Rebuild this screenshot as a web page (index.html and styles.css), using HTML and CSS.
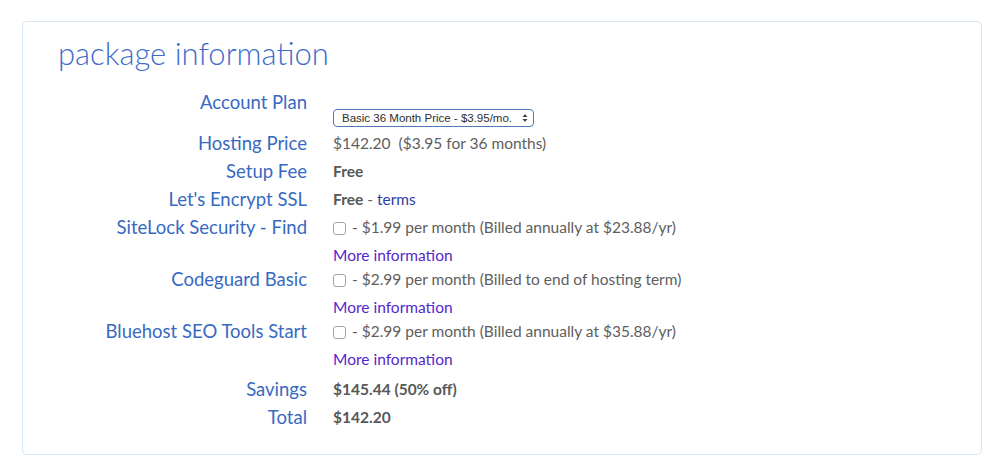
FILE: index.html
```html
<!DOCTYPE html>
<html>
    <head>
        <title>Package information</title>
        <link rel="stylesheet" href="styles.css">
    </head>
    <body>
        <div class="panel">
            <h2 class="panelTitle">package information</h2>
            <div class="info">
                <div class="row plan">
                    <div class="label">Account Plan</div>
                    <div class="value">
                        <span class="selectWrap">
                            <select name="plan" class="planSelect">
                                <option>Basic 36 Month Price - $3.95/mo.</option>
                                <option>Basic 24 Month Price - $4.95/mo.</option>
                                <option>Basic 12 Month Price - $5.95/mo.</option>
                            </select>
                            <svg class="selectArrow" width="6" height="10" viewBox="0 0 6 10">
                                <path d="M0.5 4 L3 1 L5.5 4 Z M0.5 6 L3 9 L5.5 6 Z" fill="#444" />
                            </svg>
                        </span>
                    </div>
                </div>
                <div class="row">
                    <div class="label">Hosting Price</div>
                    <div class="value">$142.20&nbsp; ($3.95 for 36 months)</div>
                </div>
                <div class="row">
                    <div class="label">Setup Fee</div>
                    <div class="value strong">Free</div>
                </div>
                <div class="row">
                    <div class="label">Let's Encrypt SSL</div>
                    <div class="value"><span class="strong">Free</span> - <a href="#" class="terms">terms</a></div>
                </div>
                <div class="row addon">
                    <div class="label">SiteLock Security - Find</div>
                    <div class="value">
                        <label class="check"><input type="checkbox" class="box" /> - $1.99 per month (Billed annually at $23.88/yr)</label>
                        <a href="#" class="more">More information</a>
                    </div>
                </div>
                <div class="row addon">
                    <div class="label">Codeguard Basic</div>
                    <div class="value">
                        <label class="check"><input type="checkbox" class="box" /> - $2.99 per month (Billed to end of hosting term)</label>
                        <a href="#" class="more">More information</a>
                    </div>
                </div>
                <div class="row addon">
                    <div class="label">Bluehost SEO Tools Start</div>
                    <div class="value">
                        <label class="check"><input type="checkbox" class="box" /> - $2.99 per month (Billed annually at $35.88/yr)</label>
                        <a href="#" class="more">More information</a>
                    </div>
                </div>
                <div class="row savings">
                    <div class="label">Savings</div>
                    <div class="value strong">$145.44 (50% off)</div>
                </div>
                <div class="row">
                    <div class="label">Total</div>
                    <div class="value strong">$142.20</div>
                </div>
            </div>
        </div>
    </body>
</html>
```

FILE: styles.css
```css
body{
    margin: 0;
    background-color: #fff;
    font-family: Lato, "Open Sans", sans-serif;
}

.panel{
    width: 958px;
    margin: 21px 0 0 22px;
    padding: 11px 0 23px 0;
    border: 1px solid #d7e5f3;
    border-radius: 5px;
}

.panelTitle{
    margin: 0 0 15px 35px;
    font-size: 31px;
    line-height: 40px;
    font-weight: 300;
    color: #3d6bcc;
}

.row{
    display: grid;
    grid-template-columns: 284px 1fr;
    column-gap: 26px;
    align-items: start;
}

.label{
    text-align: right;
    font-size: 18.5px;
    line-height: 28px;
    font-weight: 400;
    color: #3869c2;
}

.value{
    font-size: 15.5px;
    line-height: 28px;
    color: #5e5e5e;
}

.strong{
    font-weight: 700;
    color: #575757;
}

.plan .value{
    padding: 19px 0 2px 0;
    line-height: 18px;
}

.selectWrap{
    position: relative;
    display: inline-block;
}

.planSelect{
    appearance: none;
    -webkit-appearance: none;
    width: 201px;
    height: 18px;
    padding: 0 0 0 8px;
    border: 1px solid #4f78b8;
    border-radius: 4px;
    background-color: #fff;
    font-family: "Liberation Sans", Arial, sans-serif;
    font-size: 11.5px;
    color: #2e2e2e;
    display: block;
}

.selectArrow{
    position: absolute;
    right: 6px;
    top: 4px;
}

.check{
    display: block;
}

.box{
    appearance: none;
    -webkit-appearance: none;
    width: 13px;
    height: 13px;
    margin: 0 2px 0 0;
    border: 1px solid #a4a4a4;
    border-radius: 3px;
    vertical-align: -2px;
    background-color: #fff;
}

.more{
    display: block;
    color: #5526cc;
    text-decoration: none;
}

.terms{
    color: #2c3caa;
    text-decoration: none;
}

.addon + .addon{
    margin-top: -4px;
}

.savings{
    margin-top: 2px;
}
```
